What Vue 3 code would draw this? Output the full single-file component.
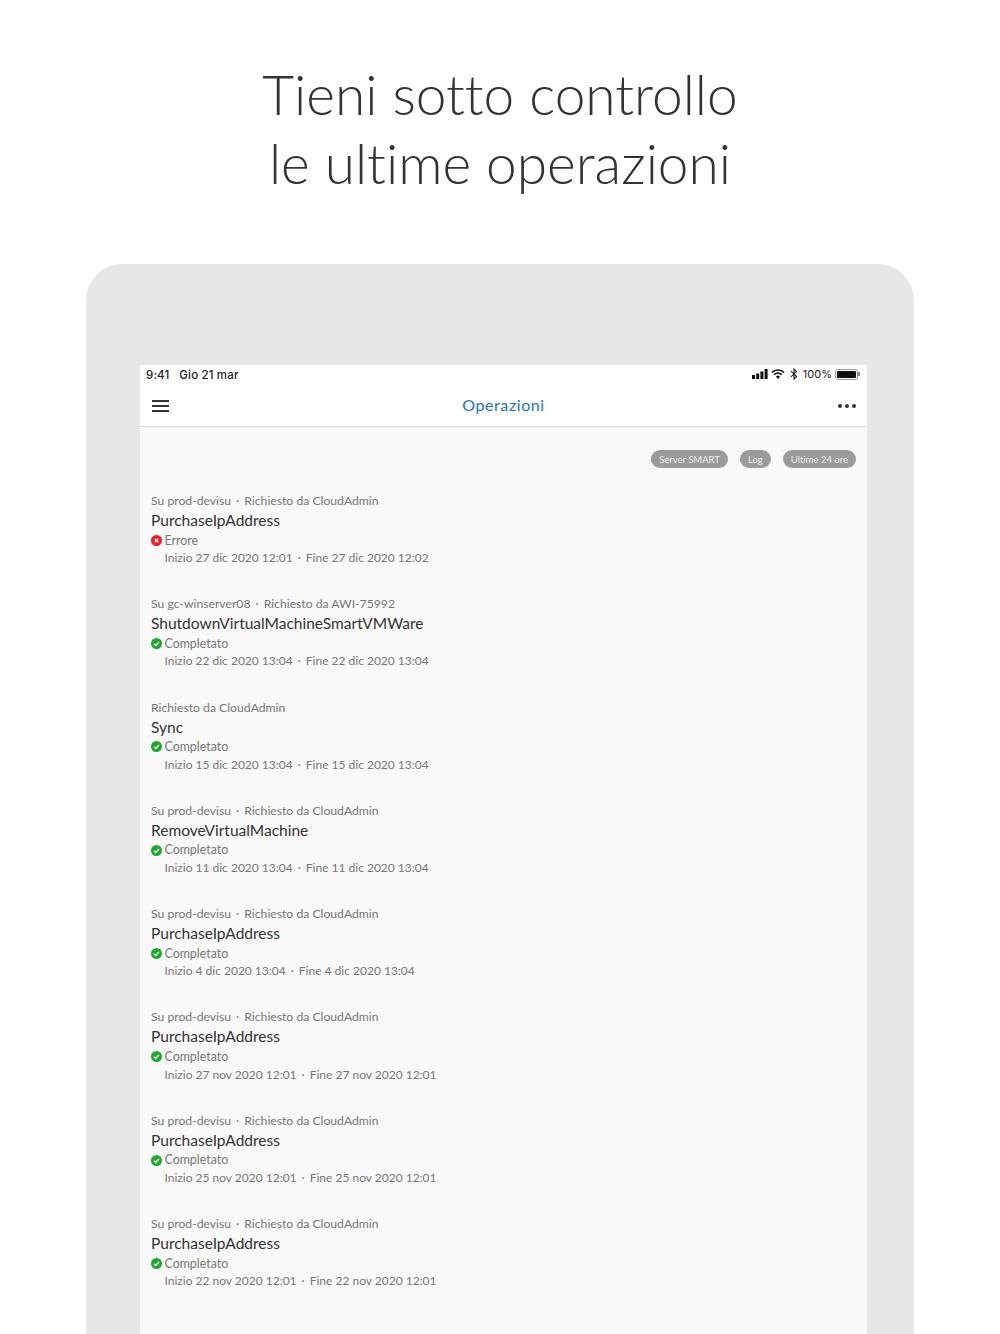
<script setup>
const ops = [
  { meta: ['Su prod-devisu', 'Richiesto da CloudAdmin'], name: 'PurchaseIpAddress', ok: false, time: ['Inizio 27 dic 2020 12:01', 'Fine 27 dic 2020 12:02'] },
  { meta: ['Su gc-winserver08', 'Richiesto da AWI-75992'], name: 'ShutdownVirtualMachineSmartVMWare', ok: true, time: ['Inizio 22 dic 2020 13:04', 'Fine 22 dic 2020 13:04'] },
  { meta: ['Richiesto da CloudAdmin'], name: 'Sync', ok: true, time: ['Inizio 15 dic 2020 13:04', 'Fine 15 dic 2020 13:04'] },
  { meta: ['Su prod-devisu', 'Richiesto da CloudAdmin'], name: 'RemoveVirtualMachine', ok: true, time: ['Inizio 11 dic 2020 13:04', 'Fine 11 dic 2020 13:04'] },
  { meta: ['Su prod-devisu', 'Richiesto da CloudAdmin'], name: 'PurchaseIpAddress', ok: true, time: ['Inizio 4 dic 2020 13:04', 'Fine 4 dic 2020 13:04'] },
  { meta: ['Su prod-devisu', 'Richiesto da CloudAdmin'], name: 'PurchaseIpAddress', ok: true, time: ['Inizio 27 nov 2020 12:01', 'Fine 27 nov 2020 12:01'] },
  { meta: ['Su prod-devisu', 'Richiesto da CloudAdmin'], name: 'PurchaseIpAddress', ok: true, time: ['Inizio 25 nov 2020 12:01', 'Fine 25 nov 2020 12:01'] },
  { meta: ['Su prod-devisu', 'Richiesto da CloudAdmin'], name: 'PurchaseIpAddress', ok: true, time: ['Inizio 22 nov 2020 12:01', 'Fine 22 nov 2020 12:01'] }
]
const filters = ['Server SMART', 'Log', 'Ultime 24 ore']
</script>

<template>
  <div class="page">
    <h1 class="headline">Tieni sotto controllo<br />le ultime operazioni</h1>
    <div class="device">
      <div class="screen">
        <div class="statusbar">
          <div class="status-left"><span>9:41</span><span>Gio 21 mar</span></div>
          <div class="status-right">
            <svg width="16" height="10" viewBox="0 0 16 10">
              <rect x="0" y="6" width="3" height="4" fill="#111" />
              <rect x="4.2" y="4.5" width="3" height="5.5" fill="#111" />
              <rect x="8.4" y="2.5" width="3" height="7.5" fill="#111" />
              <rect x="12.6" y="0" width="3" height="10" fill="#111" />
            </svg>
            <svg class="wifi" width="14" height="10" viewBox="0 0 14 10">
              <path d="M1 3.4 a8.6 8.6 0 0 1 12 0" fill="none" stroke="#111" stroke-width="1.6" />
              <path d="M3.2 5.6 a5.5 5.5 0 0 1 7.6 0" fill="none" stroke="#111" stroke-width="1.6" />
              <path d="M5 7.6 a2.8 2.8 0 0 1 4 0 L7 10 Z" fill="#111" />
            </svg>
            <svg class="bt" width="8" height="12" viewBox="0 0 8 12">
              <path d="M1 3.2 L6.6 8.4 L4 11 V1 L6.6 3.6 L1 8.8" fill="none" stroke="#222" stroke-width="1.1" />
            </svg>
            <span class="pct">100%</span>
            <div class="battery"><div class="battery-fill"></div></div>
            <div class="battery-cap"></div>
          </div>
        </div>
        <header class="navbar">
          <div class="burger"><i></i><i></i><i></i></div>
          <div class="nav-title">Operazioni</div>
          <div class="dots"><i></i><i></i><i></i></div>
        </header>
        <main class="content">
          <div class="filters">
            <span v-for="f in filters" :key="f" class="pill">{{ f }}</span>
          </div>
          <div class="list">
            <section v-for="(op, i) in ops" :key="i" class="op">
              <div class="meta">
                <template v-for="(part, j) in op.meta" :key="j">
                  <span v-if="j" class="sep">·</span>{{ part }}
                </template>
              </div>
              <div class="name">{{ op.name }}</div>
              <div class="state">
                <svg v-if="op.ok" class="state-icon" width="11" height="11" viewBox="0 0 11 11">
                  <circle cx="5.5" cy="5.5" r="5.5" fill="#1fa82f" />
                  <path d="M3 5.7 L4.8 7.4 L8 3.9" fill="none" stroke="#fff" stroke-width="1.4" />
                </svg>
                <svg v-else class="state-icon" width="11" height="11" viewBox="0 0 11 11">
                  <circle cx="5.5" cy="5.5" r="5.5" fill="#ee1c25" />
                  <path d="M3.8 3.8 L7.2 7.2 M7.2 3.8 L3.8 7.2" fill="none" stroke="#fff" stroke-width="1.3" />
                </svg>
                <span>{{ op.ok ? 'Completato' : 'Errore' }}</span>
              </div>
              <div class="time">{{ op.time[0] }}<span class="sep">·</span>{{ op.time[1] }}</div>
            </section>
          </div>
        </main>
      </div>
    </div>
  </div>
</template>

<style scoped>
.page {
  width: 1000px;
  height: 1334px;
  overflow: hidden;
  background: #fff;
  font-family: Lato, "Liberation Sans", sans-serif;
  font-variant-ligatures: none;
  padding-top: 60px;
  box-sizing: border-box;
}
.headline {
  margin: 0;
  height: 204px;
  text-align: center;
  font-size: 55px;
  line-height: 69px;
  font-weight: 300;
  color: #333;
}
.device {
  margin: 0 86px;
  height: 1070px;
  padding: 101px 47px 0 54px;
  box-sizing: border-box;
  background: #e7e7e7;
  border-radius: 36px 36px 0 0;
}
.screen {
  height: 100%;
  background: #f9f9f9;
}
.statusbar {
  height: 21px;
  padding: 0 7px 3px 6px;
  box-sizing: border-box;
  background: #fff;
  display: flex;
  justify-content: space-between;
  align-items: center;
  font-family: Inter, "Liberation Sans", sans-serif;
  font-size: 11.5px;
  font-weight: 500;
  color: #222;
}
.status-left {
  display: flex;
  gap: 10px;
  letter-spacing: 0.15px;
  margin-top: 1px;
}
.status-right {
  display: flex;
  align-items: center;
  gap: 3px;
}
.bt {
  margin-left: 2px;
}
.pct {
  margin: 0 -2px 0 2px;
  font-size: 11px;
  font-weight: 400;
}
.battery {
  width: 23px;
  height: 11px;
  border: 1px solid #999;
  border-radius: 3px;
  padding: 1px;
  box-sizing: border-box;
  margin-left: 2px;
}
.battery-fill {
  height: 100%;
  background: #111;
  border-radius: 1px;
}
.battery-cap {
  width: 2px;
  height: 4px;
  background: #888;
  margin-left: -3px;
}
.navbar {
  height: 39px;
  background: #fff;
  border-bottom: 1px solid #dcdcdc;
  display: flex;
  align-items: center;
  justify-content: space-between;
  padding: 0 11px 1px 12px;
}
.burger {
  width: 17px;
  display: flex;
  flex-direction: column;
  gap: 3px;
}
.burger i {
  display: block;
  height: 2px;
  background: #333;
}
.nav-title {
  flex: 1;
  text-align: center;
  font-size: 16px;
  line-height: 18px;
  letter-spacing: 0.6px;
  color: #1b75bb;
  padding-bottom: 2px;
}
.dots {
  display: flex;
  gap: 3px;
}
.dots i {
  display: block;
  width: 4px;
  height: 4px;
  border-radius: 50%;
  background: #333;
}
.filters {
  display: flex;
  justify-content: flex-end;
  gap: 12px;
  padding: 23px 11px 0 0;
}
.pill {
  height: 18px;
  line-height: 19px;
  padding: 0 8px;
  border-radius: 9px;
  background: #9b9b9b;
  color: #eee;
  font-size: 9.5px;
}
.list {
  padding: 24px 11px 0;
  display: flex;
  flex-direction: column;
  gap: 21px;
}
.op {
  height: 82.3px;
}
.meta {
  font-size: 12.2px;
  line-height: 18px;
  color: #777;
}
.sep {
  margin: 0 5px;
}
.name {
  font-size: 15.5px;
  line-height: 20px;
  color: #333;
}
.state {
  display: flex;
  align-items: center;
  gap: 2.5px;
  margin-top: 1.6px;
  font-size: 12.4px;
  line-height: 17.6px;
  color: #777;
}
.time {
  font-size: 12px;
  line-height: 18px;
  color: #777;
  padding-left: 13.5px;
}
.time .sep {
  margin: 0 5px;
}
</style>
